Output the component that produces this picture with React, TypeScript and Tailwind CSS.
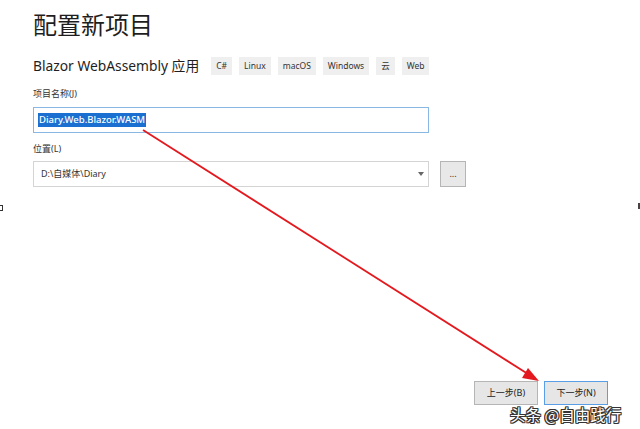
import React from "react";

const tags = ["C#", "Linux", "macOS", "Windows", "云", "Web"];

export default function App() {
  return (
    <div
      className="relative w-[640px] h-[429px] overflow-hidden bg-white text-[#1e1e1e]"
      style={{ fontFamily: '"Noto Sans", "Noto Sans CJK SC", sans-serif' }}
    >
      <div className="flex flex-col pl-[33px] pt-[9px]">
        <h1 className="text-[24px] leading-[32px] font-normal">配置新项目</h1>
        <div className="mt-[14px] flex items-center h-[22px]">
          <span className="text-[13.8px] leading-[22px]">Blazor WebAssembly 应用</span>
          <div className="ml-[12px] flex gap-[7px]">
            {tags.map((t) => (
              <span
                key={t}
                className="h-[18px] px-[5px] bg-[#efefef] text-[8.5px] leading-[18px] text-[#333]"
              >
                {t}
              </span>
            ))}
          </div>
        </div>
        <label className="mt-[10px] text-[9px] leading-[14px] text-[#333]">项目名称(J)</label>
        <div className="mt-[6px] w-[396px] h-[26px] border border-[#8ab8e4] bg-white flex items-center pl-[4px]">
          <span className="bg-[#1a6fd1] text-white text-[9.5px] leading-[14px] px-[1px] font-medium">
            Diary.Web.Blazor.WASM
          </span>
        </div>
        <label className="mt-[9px] text-[9px] leading-[14px] text-[#333]">位置(L)</label>
        <div className="mt-[5px] flex items-center gap-[11px]">
          <div className="w-[396px] h-[26px] border border-[#d4d4d4] bg-white flex items-center justify-between pl-[7px] pr-[4px]">
            <span className="text-[9px] leading-[14px] text-[#333]">D:\自媒体\Diary</span>
            <svg width="6" height="4" viewBox="0 0 6 4">
              <path d="M0 0 L6 0 L3 4 Z" fill="#666" />
            </svg>
          </div>
          <div className="w-[26px] h-[26px] border border-[#b5b5b5] bg-[#e8e8e8] flex items-center justify-center text-[9px] leading-[10px] text-[#333]">
            ...
          </div>
        </div>
      </div>

      <div className="absolute left-[474px] top-[381px] flex gap-[6px]">
        <div className="w-[64px] h-[24px] border border-[#b5b5b5] bg-[#e6e6e6] flex items-center justify-center text-[9px] text-[#222]">
          上一步(B)
        </div>
        <div className="w-[64px] h-[24px] border border-[#5a9ee6] bg-[#e6e6e6] flex items-center justify-center text-[9px] text-[#222]">
          下一步(N)
        </div>
      </div>

      <div className="absolute left-0 top-[205px] w-[3px] h-[6px] border border-l-0 border-[#333]" />
      <div className="absolute right-0 top-[203px] w-[2px] h-[6px] bg-[#444]" />

      <svg className="absolute left-0 top-0" width="640" height="429" viewBox="0 0 640 429">
        <line x1="143" y1="130" x2="528" y2="374" stroke="#e3191f" strokeWidth="1.8" />
        <path d="M539 381 L522 378 L528 368 Z" fill="#e3191f" />
      </svg>

      <div
        className="absolute left-[510px] top-[403px] text-[15.5px] leading-[22px] text-white"
        style={{
          fontFamily: '"Noto Sans CJK SC", sans-serif',
          textShadow:
            "1px 1px 0 #333, -1px -1px 0 #333, 1px -1px 0 #333, -1px 1px 0 #333, 0 1px 0 #333, 1px 0 0 #333, 0 -1px 0 #333, -1px 0 0 #333",
        }}
      >
        头条 @自由践行
      </div>
    </div>
  );
}
